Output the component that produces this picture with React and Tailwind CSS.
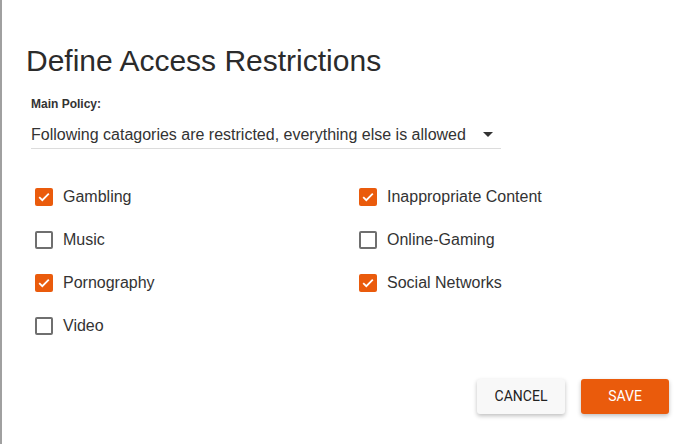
import { useState } from "react";

const CATEGORIES = [
  { id: "gambling", label: "Gambling", checked: true },
  { id: "inappropriate", label: "Inappropriate Content", checked: true },
  { id: "music", label: "Music", checked: false },
  { id: "online-gaming", label: "Online-Gaming", checked: false },
  { id: "pornography", label: "Pornography", checked: true },
  { id: "social", label: "Social Networks", checked: true },
  { id: "video", label: "Video", checked: false },
];

function Checkbox({ label, checked, onToggle }) {
  return (
    <label className="flex items-center h-[43px] cursor-pointer select-none" onClick={onToggle}>
      <span
        className={`w-[18px] h-[18px] rounded-[2px] flex items-center justify-center shrink-0 ${
          checked ? "bg-[#ea5b0c]" : "border-2 border-[#6f6f6f] bg-white"
        }`}
      >
        {checked && (
          <svg width="12" height="10" viewBox="0 0 12 10" fill="none">
            <path d="M1.2 5.2 L4.3 8.2 L10.8 1.6" stroke="white" strokeWidth="1.8" />
          </svg>
        )}
      </span>
      <span className="ml-[10px] text-[16px] text-[#333]">{label}</span>
    </label>
  );
}

export default function App() {
  const [items, setItems] = useState(CATEGORIES);

  function toggle(id) {
    setItems((list) => list.map((c) => (c.id === id ? { ...c, checked: !c.checked } : c)));
  }

  return (
    <div
      className="w-[700px] h-[444px] bg-white border-l-2 border-[#a0a0a0] flex flex-col"
      style={{ fontFamily: '"Liberation Sans", Arial, sans-serif' }}
    >
      <h1 className="mt-[43px] ml-[24px] text-[30px] leading-[36px] text-[#2b2b2b]">
        Define Access Restrictions
      </h1>

      <div className="ml-[29px] mt-[18px] w-[470px]">
        <p className="text-[12px] font-bold text-[#333] leading-[14px]">Main Policy:</p>
        <div className="mt-[10px] h-[28px] flex items-center justify-between border-b border-[#dcdcdc] pr-[8px]">
          <span className="text-[16px] text-[#333]">
            Following catagories are restricted, everything else is allowed
          </span>
          <svg width="10" height="5" viewBox="0 0 10 5">
            <path d="M0 0 L10 0 L5 5 Z" fill="#333" />
          </svg>
        </div>
      </div>

      <div className="ml-[33px] mt-[26px] grid grid-cols-[324px_1fr]">
        {items.map((c) => (
          <Checkbox key={c.id} label={c.label} checked={c.checked} onToggle={() => toggle(c.id)} />
        ))}
      </div>

      <div
        className="mt-auto mb-[30px] mr-[31px] flex justify-end gap-[16px]"
        style={{ fontFamily: "Roboto, Arial, sans-serif" }}
      >
        <button className="w-[88px] h-[35px] rounded-[3px] bg-[#f8f8f8] text-[#222] text-[14px] shadow-[0_2px_4px_rgba(0,0,0,0.25)]">
          CANCEL
        </button>
        <button className="w-[88px] h-[35px] rounded-[3px] bg-[#ea5b0c] text-white text-[14px] shadow-[0_2px_4px_rgba(0,0,0,0.25)]">
          SAVE
        </button>
      </div>
    </div>
  );
}
